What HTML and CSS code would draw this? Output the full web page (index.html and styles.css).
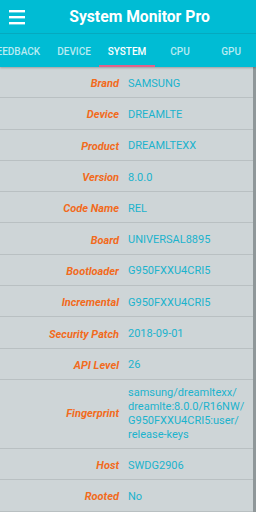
FILE: index.html
```html
<!DOCTYPE html>
<html>
<head>
<meta charset="utf-8">
<link rel="stylesheet" href="styles.css">
</head>
<body>
<div class="app">
  <header class="appbar">
    <div class="toolbar">
      <svg class="menu" width="16" height="16" viewBox="0 0 16 16"><rect x="0" y="1" width="16" height="2.4" fill="#fff"/><rect x="0" y="7" width="16" height="2.4" fill="#fff"/><rect x="0" y="13" width="16" height="2.4" fill="#fff"/></svg>
      <div class="title">System Monitor Pro</div>
    </div>
    <nav class="tabs">
      <div class="tab first">FEEDBACK</div>
      <div class="tab w50">DEVICE</div>
      <div class="tab active">SYSTEM</div>
      <div class="tab w50">CPU</div>
      <div class="tab w52">GPU</div>
    </nav>
  </header>
  <main class="list">
    <div class="row"><div class="label">Brand</div><div class="value">SAMSUNG</div></div>
    <div class="row"><div class="label">Device</div><div class="value">DREAMLTE</div></div>
    <div class="row"><div class="label">Product</div><div class="value">DREAMLTEXX</div></div>
    <div class="row"><div class="label">Version</div><div class="value">8.0.0</div></div>
    <div class="row"><div class="label">Code Name</div><div class="value">REL</div></div>
    <div class="row"><div class="label">Board</div><div class="value">UNIVERSAL8895</div></div>
    <div class="row"><div class="label">Bootloader</div><div class="value">G950FXXU4CRI5</div></div>
    <div class="row"><div class="label">Incremental</div><div class="value">G950FXXU4CRI5</div></div>
    <div class="row"><div class="label">Security Patch</div><div class="value">2018-09-01</div></div>
    <div class="row"><div class="label">API Level</div><div class="value">26</div></div>
    <div class="row tall"><div class="label">Fingerprint</div><div class="value">samsung/dreamltexx/<br>dreamlte:8.0.0/R16NW/<br>G950FXXU4CRI5:user/<br>release-keys</div></div>
    <div class="row"><div class="label">Host</div><div class="value">SWDG2906</div></div>
    <div class="row"><div class="label">Rooted</div><div class="value">No</div></div>
  </main>
  <div class="scrollbar"></div>
</div>
</body>
</html>
```
FILE: styles.css
```css
* { box-sizing: border-box; }
html, body { margin: 0; padding: 0; }
body {
  width: 256px;
  height: 512px;
  overflow: hidden;
  font-family: Roboto, "Noto Sans", sans-serif;
  background: #ced5d7;
}
.app { position: relative; width: 256px; height: 512px; overflow: hidden; }
.appbar {
  background: #00bcd4;
  box-shadow: 0 1px 2px rgba(0,0,0,0.25);
  position: relative;
  z-index: 1;
}
.toolbar {
  height: 34px;
  display: flex;
  align-items: center;
  padding-left: 9px;
  border-bottom: 1px solid #05a9bf;
}
.menu { display: block; }
.title {
  flex: 1;
  text-align: center;
  color: #fff;
  font-weight: 700;
  font-size: 15.7px;
  padding-right: 2px;
}
.tabs {
  height: 33px;
  display: flex;
  white-space: nowrap;
  position: relative;
}
.tab {
  flex: none;
  height: 33px;
  padding-top: 2px;
  line-height: 31px;
  font-size: 10px;
  font-weight: 500;
  color: rgba(255,255,255,0.72);
  text-align: center;
}
.tab.first { margin-left: -18px; padding-left: 9px; padding-right: 9px; }
.tab.w50 { width: 50px; }
.tab.w52 { width: 52px; }
.tab.active {
  color: #fff;
  border-bottom: 2px solid #e2618a;
  width: 56px;
}
.list { display: flex; flex-direction: column; }
.row {
  display: flex;
  align-items: center;
  height: 31.3px;
  padding-top: 3px;
  border-bottom: 1px solid #b9c0c2;
  flex: none;
}
.row.tall { height: 69px; padding-top: 0; }
.label {
  width: 119px;
  text-align: right;
  color: #f26b1d;
  font-weight: 700;
  font-style: italic;
  font-size: 11px;
  flex: none;
}
.value {
  padding-left: 9px;
  color: #1bb3cd;
  font-size: 11px;
  line-height: 14px;
}
.scrollbar {
  position: absolute;
  right: 0;
  top: 67px;
  width: 3px;
  height: 445px;
  background: #8f9799;
}
```
